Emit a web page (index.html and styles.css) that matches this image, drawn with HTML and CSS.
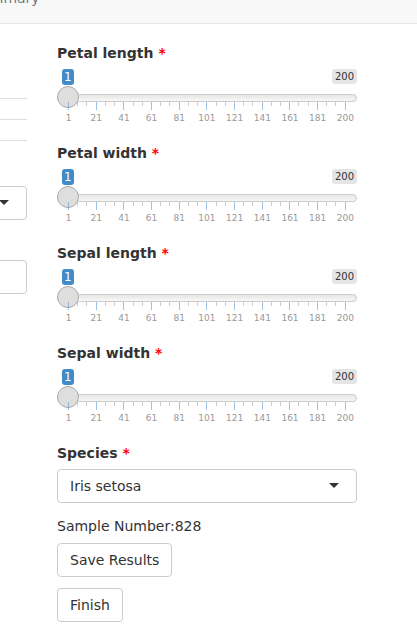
FILE: index.html
```html
<!DOCTYPE html>
<html>
<head>
<meta charset="utf-8">
<link rel="stylesheet" href="styles.css">
</head>
<body>
<nav class="navbar"><span class="nav-link">Summary</span></nav>
<div class="row">
  <div class="col-left">
    <div class="table-lines"><div class="tline"></div><div class="tline"></div><div class="tline"></div></div>
    <div class="box box-select"><span class="caret"></span></div>
    <div class="box box-input"></div>
  </div>
  <div class="col-main">
    <div class="form-group">
      <label class="label">Petal length <span class="req">*</span></label>
      <div class="irs">
        <div class="irs-labels"><span class="irs-single">1</span><span class="irs-max">200</span></div>
        <div class="irs-line"><span class="irs-handle"></span></div>
        <div class="irs-grid">
          <div class="ticks"><i class="tick"></i><i class="tick sm"></i><i class="tick sm"></i><i class="tick"></i><i class="tick sm"></i><i class="tick sm"></i><i class="tick"></i><i class="tick sm"></i><i class="tick sm"></i><i class="tick"></i><i class="tick sm"></i><i class="tick sm"></i><i class="tick"></i><i class="tick sm"></i><i class="tick sm"></i><i class="tick"></i><i class="tick sm"></i><i class="tick sm"></i><i class="tick"></i><i class="tick sm"></i><i class="tick sm"></i><i class="tick"></i><i class="tick sm"></i><i class="tick sm"></i><i class="tick"></i><i class="tick sm"></i><i class="tick sm"></i><i class="tick"></i><i class="tick sm"></i><i class="tick sm"></i><i class="tick"></i></div>
          <div class="tick-labels"><span class="tl">1</span><span class="tl">21</span><span class="tl">41</span><span class="tl">61</span><span class="tl">81</span><span class="tl">101</span><span class="tl">121</span><span class="tl">141</span><span class="tl">161</span><span class="tl">181</span><span class="tl">200</span></div>
        </div>
      </div>
    </div>
    <div class="form-group">
      <label class="label">Petal width <span class="req">*</span></label>
      <div class="irs">
        <div class="irs-labels"><span class="irs-single">1</span><span class="irs-max">200</span></div>
        <div class="irs-line"><span class="irs-handle"></span></div>
        <div class="irs-grid">
          <div class="ticks"><i class="tick"></i><i class="tick sm"></i><i class="tick sm"></i><i class="tick"></i><i class="tick sm"></i><i class="tick sm"></i><i class="tick"></i><i class="tick sm"></i><i class="tick sm"></i><i class="tick"></i><i class="tick sm"></i><i class="tick sm"></i><i class="tick"></i><i class="tick sm"></i><i class="tick sm"></i><i class="tick"></i><i class="tick sm"></i><i class="tick sm"></i><i class="tick"></i><i class="tick sm"></i><i class="tick sm"></i><i class="tick"></i><i class="tick sm"></i><i class="tick sm"></i><i class="tick"></i><i class="tick sm"></i><i class="tick sm"></i><i class="tick"></i><i class="tick sm"></i><i class="tick sm"></i><i class="tick"></i></div>
          <div class="tick-labels"><span class="tl">1</span><span class="tl">21</span><span class="tl">41</span><span class="tl">61</span><span class="tl">81</span><span class="tl">101</span><span class="tl">121</span><span class="tl">141</span><span class="tl">161</span><span class="tl">181</span><span class="tl">200</span></div>
        </div>
      </div>
    </div>
    <div class="form-group">
      <label class="label">Sepal length <span class="req">*</span></label>
      <div class="irs">
        <div class="irs-labels"><span class="irs-single">1</span><span class="irs-max">200</span></div>
        <div class="irs-line"><span class="irs-handle"></span></div>
        <div class="irs-grid">
          <div class="ticks"><i class="tick"></i><i class="tick sm"></i><i class="tick sm"></i><i class="tick"></i><i class="tick sm"></i><i class="tick sm"></i><i class="tick"></i><i class="tick sm"></i><i class="tick sm"></i><i class="tick"></i><i class="tick sm"></i><i class="tick sm"></i><i class="tick"></i><i class="tick sm"></i><i class="tick sm"></i><i class="tick"></i><i class="tick sm"></i><i class="tick sm"></i><i class="tick"></i><i class="tick sm"></i><i class="tick sm"></i><i class="tick"></i><i class="tick sm"></i><i class="tick sm"></i><i class="tick"></i><i class="tick sm"></i><i class="tick sm"></i><i class="tick"></i><i class="tick sm"></i><i class="tick sm"></i><i class="tick"></i></div>
          <div class="tick-labels"><span class="tl">1</span><span class="tl">21</span><span class="tl">41</span><span class="tl">61</span><span class="tl">81</span><span class="tl">101</span><span class="tl">121</span><span class="tl">141</span><span class="tl">161</span><span class="tl">181</span><span class="tl">200</span></div>
        </div>
      </div>
    </div>
    <div class="form-group">
      <label class="label">Sepal width <span class="req">*</span></label>
      <div class="irs">
        <div class="irs-labels"><span class="irs-single">1</span><span class="irs-max">200</span></div>
        <div class="irs-line"><span class="irs-handle"></span></div>
        <div class="irs-grid">
          <div class="ticks"><i class="tick"></i><i class="tick sm"></i><i class="tick sm"></i><i class="tick"></i><i class="tick sm"></i><i class="tick sm"></i><i class="tick"></i><i class="tick sm"></i><i class="tick sm"></i><i class="tick"></i><i class="tick sm"></i><i class="tick sm"></i><i class="tick"></i><i class="tick sm"></i><i class="tick sm"></i><i class="tick"></i><i class="tick sm"></i><i class="tick sm"></i><i class="tick"></i><i class="tick sm"></i><i class="tick sm"></i><i class="tick"></i><i class="tick sm"></i><i class="tick sm"></i><i class="tick"></i><i class="tick sm"></i><i class="tick sm"></i><i class="tick"></i><i class="tick sm"></i><i class="tick sm"></i><i class="tick"></i></div>
          <div class="tick-labels"><span class="tl">1</span><span class="tl">21</span><span class="tl">41</span><span class="tl">61</span><span class="tl">81</span><span class="tl">101</span><span class="tl">121</span><span class="tl">141</span><span class="tl">161</span><span class="tl">181</span><span class="tl">200</span></div>
        </div>
      </div>
    </div>
    <div class="form-group species">
      <label class="label">Species <span class="req">*</span></label>
      <div class="select">Iris setosa<span class="caret"></span></div>
    </div>
    <div class="sample">Sample Number:828</div>
    <div class="actions">
      <button class="btn" type="button">Save Results</button>
      <button class="btn" type="button">Finish</button>
    </div>
  </div>
</div>
</body>
</html>
```
FILE: styles.css
```css
* { box-sizing: border-box; }
html, body { margin: 0; padding: 0; background: #fff; }
body {
  font-family: "DejaVu Sans", Verdana, sans-serif;
  font-size: 14px;
  line-height: 20px;
  color: #333;
  overflow: hidden;
}
.navbar {
  height: 24px;
  background: #f8f8f8;
  border-bottom: 1px solid #e7e7e7;
  overflow: hidden;
}
.nav-link {
  display: block;
  margin: -12px 0 0 -28px;
  color: #777;
  line-height: 20px;
  white-space: nowrap;
}
.row {
  display: flex;
  gap: 30px;
  margin-left: -273px;
  padding-top: 20px;
}
.col-left, .col-main { width: 300px; flex: none; }
.table-lines { margin-top: 54px; }
.tline { height: 21px; border-top: 1px solid #ddd; }
.box {
  height: 34px;
  border: 1px solid #ccc;
  border-radius: 4px;
  background: #fff;
}
.box-select { margin-top: 25px; position: relative; }
.box-input { margin-top: 40px; }
.caret {
  position: absolute;
  right: 17px;
  top: 50%;
  margin-top: -3px;
  width: 0;
  height: 0;
  border-style: solid;
  border-width: 5px 5px 0 5px;
  border-color: #333 transparent transparent transparent;
}
.form-group { margin-bottom: 15px; }
.label { display: block; font-weight: bold; line-height: 18px; margin-bottom: 7px; }
.req { color: #f00; }
.irs { height: 60px; }
.irs-labels {
  display: flex;
  justify-content: space-between;
  align-items: flex-start;
  height: 25px;
}
.irs-single {
  margin-left: 5px;
  background: #428bca;
  color: #fff;
  font-size: 12px;
  line-height: 14px;
  padding: 1px 2px;
  border-radius: 3px;
}
.irs-max {
  background: rgba(0, 0, 0, 0.1);
  color: #333;
  font-size: 10px;
  line-height: 1.333;
  padding: 1px 3px;
  border-radius: 3px;
}
.irs-line {
  position: relative;
  height: 8px;
  border: 1px solid #ccc;
  border-radius: 8px;
  background: linear-gradient(to bottom, #dedede -50%, #fff 150%);
  background-color: #ededed;
}
.irs-handle {
  position: absolute;
  left: -1px;
  top: -9px;
  width: 22px;
  height: 22px;
  border: 1px solid #ababab;
  border-radius: 50%;
  background: #dedede;
  box-shadow: 1px 1px 3px rgba(255, 255, 255, 0.3);
}
.irs-grid { margin: 0 11px; }
.ticks {
  display: flex;
  justify-content: space-between;
  align-items: flex-start;
  height: 8px;
}
.tick { display: block; width: 1px; height: 8px; background: #428bca; opacity: 0.5; }
.tick.sm { height: 4px; background: #999; }
.tick-labels {
  display: flex;
  justify-content: space-between;
  margin-top: 2px;
}
.tl {
  width: 1px;
  display: flex;
  justify-content: center;
  font-size: 9px;
  line-height: 12px;
  color: #999;
  white-space: nowrap;
}
.select {
  position: relative;
  height: 34px;
  border: 1px solid #ccc;
  border-radius: 4px;
  padding: 6px 12px;
  background: #fff;
}
.form-group.species { margin-bottom: 13px; }
.sample { margin-bottom: 7px; }
.actions {
  display: flex;
  flex-direction: column;
  align-items: flex-start;
  gap: 11px;
}
.btn {
  font-family: inherit;
  font-size: 14px;
  line-height: 20px;
  color: #333;
  background: #fff;
  border: 1px solid #ccc;
  border-radius: 4px;
  padding: 6px 12px;
  margin: 0;
}
```
